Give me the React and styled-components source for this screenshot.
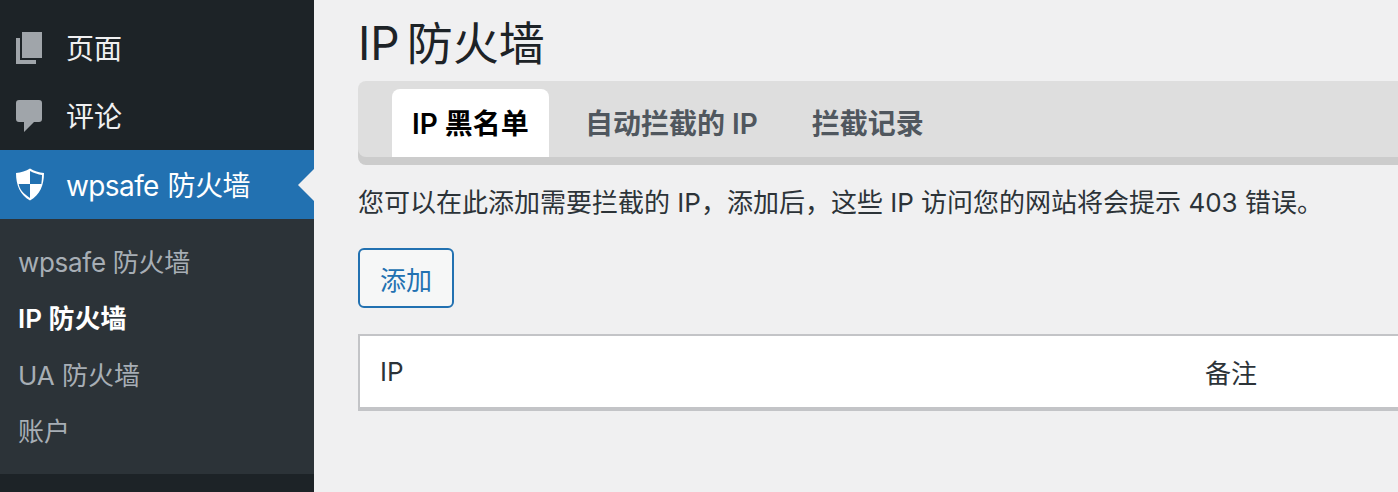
import React from 'react';
import styled, {createGlobalStyle} from 'styled-components';

const Global = createGlobalStyle`
  html, body {
    margin: 0;
    padding: 0;
    height: 100%;
    overflow: hidden;
    background: #f0f0f1;
  }
  body {
    font-family: Inter, "Noto Sans CJK SC", sans-serif;
  }
`;

const Page = styled.div`
  display: flex;
  width: 1398px;
  height: 492px;
  overflow: hidden;
`;

const Sidebar = styled.nav`
  flex: none;
  width: 314px;
  padding-top: 14px;
  background: #1d2327;
`;

const MenuItem = styled.div`
  position: relative;
  display: flex;
  align-items: center;
  gap: 22px;
  height: ${p => (p.$active ? 69 : 68)}px;
  padding-left: 16px;
  font-size: 28px;
  color: ${p => (p.$active ? '#fff' : '#f0f0f1')};
  background: ${p => (p.$active ? '#2271b1' : 'transparent')};
`;

const MenuLabel = styled.span`
  margin-bottom: 2px;
  letter-spacing: ${p => (p.$tight ? '-0.6px' : '0')};
  word-spacing: ${p => (p.$tight ? '1.5px' : '0')};
`;

const IconSlot = styled.svg`
  flex: none;
  width: 28px;
  height: 36px;
`;

const Notch = styled.span`
  position: absolute;
  right: 0;
  top: 50%;
  margin-top: -16px;
  border: 16px solid transparent;
  border-right-color: #f0f0f1;
  border-left-width: 0;
`;

const SubMenu = styled.div`
  display: flex;
  flex-direction: column;
  height: 255px;
  padding-top: 15.5px;
  box-sizing: border-box;
  background: #2c3338;
`;

const SubItem = styled.div`
  height: 56.5px;
  line-height: 56px;
  padding-left: 18px;
  font-size: 26px;
  font-weight: ${p => (p.$current ? 600 : 400)};
  letter-spacing: ${p => (p.$tight ? '-0.3px' : '0')};
  color: ${p => (p.$current ? '#fff' : '#a7aeb5')};
`;

const Main = styled.main`
  flex: 1;
  min-width: 0;
  padding-left: 44px;
  overflow: hidden;
  color: #2c3338;
`;

const Content = styled.div`
  width: 1200px;
`;

const Title = styled.h1`
  margin: 0;
  height: 81px;
  padding-top: 13px;
  box-sizing: border-box;
  font-size: 46px;
  line-height: 60px;
  font-weight: 400;
  word-spacing: -6px;
  color: #1d2327;
`;

const TabBar = styled.div`
  display: flex;
  align-items: flex-end;
  height: 76px;
  padding-left: 34px;
  box-sizing: border-box;
  border-radius: 8px;
  background: #dedede;
  box-shadow: 0 8px 0 #cccccc;
`;

const Tab = styled.div`
  display: flex;
  align-items: center;
  justify-content: center;
  height: 68px;
  padding: 0 ${p => (p.$active ? 20 : 27)}px 2px;
  margin-right: ${p => (p.$active ? 9 : 0)}px;
  box-sizing: border-box;
  border-radius: 8px 8px 0 0;
  font-size: 28px;
  font-weight: 600;
  color: ${p => (p.$active ? '#000' : '#50575e')};
  background: ${p => (p.$active ? '#fff' : 'transparent')};
`;

const Description = styled.p`
  margin: 24px 0 0;
  font-size: 26px;
  line-height: 44px;
  color: #2c3338;
`;

const AddButton = styled.button`
  display: block;
  width: 96px;
  height: 60px;
  margin-top: 23px;
  padding: 0;
  border: 2px solid #2271b1;
  border-radius: 6px;
  background: #f6f7f7;
  font-family: inherit;
  font-size: 26px;
  color: #2271b1;
`;

const Table = styled.div`
  display: grid;
  grid-template-columns: 825px 1fr;
  align-items: center;
  height: 77px;
  margin-top: 26px;
  padding-left: 20px;
  box-sizing: border-box;
  border: 2px solid #c3c4c7;
  border-bottom-width: 4px;
  background: #fff;
  font-size: 26px;
  color: #2c3338;
`;

function PagesIcon() {
  return (
    <IconSlot viewBox="0 0 28 36">
      <path fill="#a0a5aa" d="M6 2h20v26H6z" />
      <path fill="#a0a5aa" d="M0 8h4v22h16v4H0z" />
    </IconSlot>
  );
}

function CommentIcon() {
  return (
    <IconSlot viewBox="0 0 28 36">
      <path
        fill="#a0a5aa"
        d="M3 2h20a3 3 0 0 1 3 3v16a3 3 0 0 1-3 3h-5L8 34V24H3a3 3 0 0 1-3-3V5a3 3 0 0 1 3-3z"
      />
    </IconSlot>
  );
}

function ShieldIcon() {
  return (
    <IconSlot viewBox="0 0 28 36">
      <path fill="#fff" d="M14 1.500C18 4 23 5.500 28 6 28 18 24 28 14 33.500 4 28 0 18 0 6 5 5.500 10 4 14 1.500z" />
      <path fill="#2271b1" d="M14 4C18 6.200 22 7.400 26 8 26 11 25.800 14 25.300 17H14z" />
      <path fill="#2271b1" d="M14 17V31C7 26.500 3.500 22 2.700 17z" />
    </IconSlot>
  );
}

export default function App() {
  return (
    <Page>
      <Global />
      <Sidebar>
        <MenuItem><PagesIcon /><MenuLabel>页面</MenuLabel></MenuItem>
        <MenuItem><CommentIcon /><MenuLabel>评论</MenuLabel></MenuItem>
        <MenuItem $active><ShieldIcon /><MenuLabel $tight>wpsafe 防火墙</MenuLabel><Notch /></MenuItem>
        <SubMenu>
          <SubItem $tight>wpsafe 防火墙</SubItem>
          <SubItem $current>IP 防火墙</SubItem>
          <SubItem>UA 防火墙</SubItem>
          <SubItem>账户</SubItem>
        </SubMenu>
      </Sidebar>
      <Main>
        <Content>
          <Title>IP 防火墙</Title>
          <TabBar>
            <Tab $active>IP 黑名单</Tab>
            <Tab>自动拦截的 IP</Tab>
            <Tab>拦截记录</Tab>
          </TabBar>
          <Description>您可以在此添加需要拦截的 IP，添加后，这些 IP 访问您的网站将会提示 403 错误。</Description>
          <AddButton>添加</AddButton>
          <Table>
            <span>IP</span>
            <span>备注</span>
          </Table>
        </Content>
      </Main>
    </Page>
  );
}
